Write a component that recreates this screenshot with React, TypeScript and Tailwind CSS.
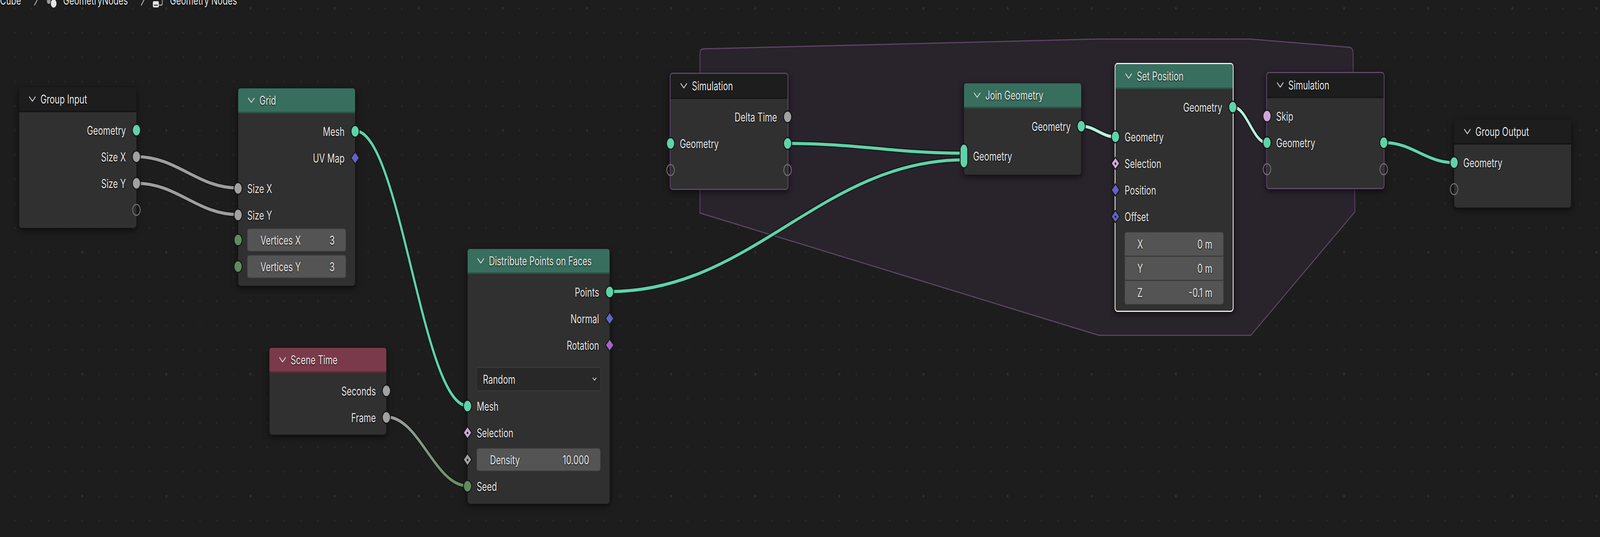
import React, { useLayoutEffect, useState } from "react";

type Kind = "geo" | "float" | "int" | "vec" | "bool" | "rot";

const fills: Record<Kind, string> = {
  geo: "bg-[#5ed3a9]",
  float: "bg-[#a1a1a1]",
  int: "bg-[#5f8b5f]",
  vec: "bg-[#6363c7]",
  bool: "bg-[#cda6d7]",
  rot: "bg-[#a463c9]",
};

const textCls = "text-[31px] leading-none text-[#e4e4e4] whitespace-nowrap [text-shadow:0_2px_3px_rgba(0,0,0,0.7)]";

// sockets
function Dot({ k }: { k: Kind }) {
  return <span className={`block h-[33px] w-[33px] rounded-full border-[3px] border-[#171717] ${fills[k]}`} />;
}

function Diamond({ k, dot = false }: { k: Kind; dot?: boolean }) {
  return (
    <span className={`flex h-[25px] w-[25px] rotate-45 items-center justify-center rounded-[2px] border-[3px] border-[#171717] ${fills[k]}`}>
      {dot && <span className="block h-[6px] w-[6px] rounded-full bg-[#1a1a1a]" />}
    </span>
  );
}

function Hollow() {
  return <span className="block h-[31px] w-[31px] rounded-full border-[3px] border-[#6e6e6e]" />;
}

function Multi() {
  return <span className={`block h-[64px] w-[31px] rounded-full border-[3px] border-[#171717] ${fills.geo}`} />;
}

function SockL({ children }: { children: React.ReactNode }) {
  return <span className="absolute left-0 top-1/2 flex -translate-x-1/2 -translate-y-1/2 items-center justify-center">{children}</span>;
}

function SockR({ children }: { children: React.ReactNode }) {
  return <span className="absolute right-0 top-1/2 flex translate-x-1/2 -translate-y-1/2 items-center justify-center">{children}</span>;
}

function Row({ label, l, r, out = false }: { label?: string; l?: React.ReactNode; r?: React.ReactNode; out?: boolean }) {
  return (
    <div className={`relative flex h-[68px] shrink-0 items-center ${out ? "justify-end pr-[39px]" : "pl-[34px]"}`}>
      {l && <SockL>{l}</SockL>}
      {label && <span className={textCls}>{label}</span>}
      {r && <SockR>{r}</SockR>}
    </div>
  );
}

function FieldRow({ label, value, l }: { label: string; value: string; l?: React.ReactNode }) {
  return (
    <div className="relative shrink-0 px-[33px]">
      {l && <SockL>{l}</SockL>}
      <div className="flex h-[60px] items-center justify-between rounded-[8px] border-2 border-[#3b3b3b] bg-[#545454] pl-[48px] pr-[41px]">
        <span className={textCls}>{label}</span>
        <span className={textCls}>{value}</span>
      </div>
    </div>
  );
}

function Chevron() {
  return (
    <svg width="26" height="15" viewBox="0 0 26 15" className="shrink-0">
      <polyline points="2,2 13,13 24,2" fill="none" stroke="#d4d4d4" strokeWidth="2.6" strokeLinecap="round" strokeLinejoin="round" />
    </svg>
  );
}

function Node({
  pos,
  title,
  head = "bg-[#1d1d1d]",
  frame = "border border-[#141414]",
  children,
}: {
  pos: string;
  title: string;
  head?: string;
  frame?: string;
  children: React.ReactNode;
}) {
  return (
    <div className={`absolute flex flex-col rounded-[10px] bg-[#303030] shadow-[0_6px_18px_rgba(0,0,0,0.55)] ${frame} ${pos}`}>
      <div className={`flex h-[64px] shrink-0 items-center gap-[17px] rounded-t-[8px] border-b-4 border-black/25 pl-[36px] ${head}`}>
        <Chevron />
        <span className={textCls}>{title}</span>
      </div>
      <div className="flex flex-col pt-[12px]">{children}</div>
    </div>
  );
}

type Wire = { a: [number, number]; b: [number, number]; color: string };

const wires: Wire[] = [
  { a: [507, 401], b: [882, 481], color: "#9e9e9e" },
  { a: [507, 469], b: [882, 549], color: "#9e9e9e" },
  { a: [1318, 335], b: [1733, 1038], color: "#5ed3a9" },
  { a: [1434, 1067], b: [1733, 1243], color: "url(#frameSeed)" },
  { a: [2262, 746], b: [3575, 409], color: "#5ed3a9" },
  { a: [2922, 367], b: [3575, 392], color: "#5ed3a9" },
  { a: [4011, 323], b: [4136, 350], color: "#b8f1de" },
  { a: [4574, 274], b: [4697, 365], color: "#b8f1de" },
  { a: [5134, 365], b: [5392, 416], color: "#5ed3a9" },
];

function wirePath([x1, y1]: [number, number], [x2, y2]: [number, number]) {
  const h = Math.abs(x2 - x1) * 0.4;
  return `M${x1} ${y1} C${x1 + h} ${y1} ${x2 - h} ${y2} ${x2} ${y2}`;
}

const tileDots = [0, 1, 2, 3, 4].flatMap((i) => [0, 1, 2, 3, 4].map((j) => ({ i, j })));

function Canvas() {
  return (
    <svg className="absolute inset-0" width="5934" height="1374" viewBox="0 0 5934 1374">
      <defs>
        <pattern id="dots" x="273.8" y="-9.7" width="312" height="312" patternUnits="userSpaceOnUse">
          {tileDots.map(({ i, j }) => (
            <circle
              key={`${i}-${j}`}
              cx={31.2 + 62.4 * i}
              cy={31.2 + 62.4 * j}
              r={i === 0 && j === 0 ? 3.6 : 2.5}
              fill={i === 0 && j === 0 ? "#2f2f2f" : "#2a2a2a"}
            />
          ))}
        </pattern>
        <linearGradient id="frameSeed" gradientUnits="userSpaceOnUse" x1="1434" y1="0" x2="1733" y2="0">
          <stop offset="0" stopColor="#a1a1a1" />
          <stop offset="1" stopColor="#5f8b5f" />
        </linearGradient>
      </defs>
      <rect width="5934" height="1374" fill="url(#dots)" />

      {/* simulation zone */}
      <path
        d="M2596 138 Q2596 125 2609 125 L4070 100 L4639 100 L5004 121 Q5018 122 5018 136 L5025 542 L4639 858 L4076 858 L2596 545 Z"
        fill="#29232b"
        stroke="#5b4563"
        strokeWidth="3"
        strokeLinejoin="round"
      />

      {wires.map((w, i) => (
        <g key={i}>
          <path d={wirePath(w.a, w.b)} fill="none" stroke="#151515" strokeWidth="13" strokeLinecap="round" />
          <path d={wirePath(w.a, w.b)} fill="none" stroke={w.color} strokeWidth="8" strokeLinecap="round" />
        </g>
      ))}
    </svg>
  );
}

function Breadcrumb() {
  return (
    <div className="relative -mt-[20px] flex h-[40px] items-center">
      <span className={`${textCls} leading-[40px]`}>Cube</span>
      <svg width="16" height="40" viewBox="0 0 16 40" className="ml-[47px] shrink-0">
        <polyline points="3,7 13,20 3,33" fill="none" stroke="#c8c8c8" strokeWidth="2.5" strokeLinecap="round" strokeLinejoin="round" />
      </svg>
      <svg width="36" height="40" viewBox="0 0 36 40" className="ml-[33px] shrink-0">
        <circle cx="7" cy="23" r="7" fill="#9a9a9a" />
        <circle cx="25" cy="29" r="10.5" fill="#e6e6e6" />
      </svg>
      <span className={`${textCls} ml-[24px] leading-[40px]`}>GeometryNodes</span>
      <svg width="16" height="40" viewBox="0 0 16 40" className="ml-[47px] shrink-0">
        <polyline points="3,7 13,20 3,33" fill="none" stroke="#c8c8c8" strokeWidth="2.5" strokeLinecap="round" strokeLinejoin="round" />
      </svg>
      <svg width="40" height="40" viewBox="0 0 40 40" className="ml-[29px] shrink-0">
        <rect x="1" y="23" width="22" height="16" rx="4" fill="#e6e6e6" />
        <rect x="5" y="32" width="14" height="2.5" fill="#2a2a2a" />
        <path d="M23 33 H32 Q36 33 36 29 V18" fill="none" stroke="#bdbdbd" strokeWidth="2.5" />
      </svg>
      <span className={`${textCls} ml-[24px] leading-[40px]`}>Geometry Nodes</span>
    </div>
  );
}

// the editor is laid out at 5934x1374 and fitted to whatever window we get
function useFit() {
  const read = () =>
    typeof window === "undefined" ? { x: 1, y: 1 } : { x: window.innerWidth / 5934, y: window.innerHeight / 1374 };
  const [fit, setFit] = useState(read);
  useLayoutEffect(() => {
    const onResize = () => setFit(read());
    onResize();
    window.addEventListener("resize", onResize);
    return () => window.removeEventListener("resize", onResize);
  }, []);
  return fit;
}

export default function App() {
  const fit = useFit();
  return (
    <div className="h-screen w-full overflow-hidden bg-[#1d1d1d]">
      <div
        className="relative h-[1374px] w-[5934px] origin-top-left overflow-hidden bg-[#1d1d1d] font-['Inter',sans-serif]"
        style={{ transform: `scale(${fit.x}, ${fit.y})` }}
      >
        <Canvas />
        <Breadcrumb />

        <Node pos="left-[70px] top-[222px] w-[437px] h-[362px]" title="Group Input">
          <Row out label="Geometry" r={<Dot k="geo" />} />
          <Row out label="Size X" r={<Dot k="float" />} />
          <Row out label="Size Y" r={<Dot k="float" />} />
          <Row out r={<Hollow />} />
        </Node>

        <Node pos="left-[882px] top-[225px] w-[436px] h-[507px]" title="Grid" head="bg-[#386e5e]">
          <Row out label="Mesh" r={<Dot k="geo" />} />
          <Row out label="UV Map" r={<Diamond k="vec" />} />
          <div className="h-[10px] shrink-0" />
          <Row label="Size X" l={<Dot k="float" />} />
          <Row label="Size Y" l={<Dot k="float" />} />
          <FieldRow label="Vertices X" value="3" l={<Dot k="int" />} />
          <div className="h-[8px] shrink-0" />
          <FieldRow label="Vertices Y" value="3" l={<Dot k="int" />} />
        </Node>

        <Node pos="left-[998px] top-[889px] w-[436px] h-[224px]" title="Scene Time" head="bg-[#7b3a4b]">
          <Row out label="Seconds" r={<Dot k="float" />} />
          <Row out label="Frame" r={<Dot k="float" />} />
        </Node>

        <Node pos="left-[1733px] top-[636px] w-[529px] h-[654px]" title="Distribute Points on Faces" head="bg-[#386e5e]">
          <Row out label="Points" r={<Dot k="geo" />} />
          <Row out label="Normal" r={<Diamond k="vec" />} />
          <Row out label="Rotation" r={<Diamond k="rot" />} />
          <div className="h-[22px] shrink-0" />
          <div className="mx-[32px] flex h-[62px] shrink-0 items-center justify-between rounded-[8px] border-2 border-[#3c3c3c] bg-[#282828] pl-[23px] pr-[14px]">
            <span className={textCls}>Random</span>
            <svg width="16" height="10" viewBox="0 0 16 10">
              <polyline points="2,2 8,8 14,2" fill="none" stroke="#d8d8d8" strokeWidth="2.4" strokeLinecap="round" strokeLinejoin="round" />
            </svg>
          </div>
          <div className="h-[4px] shrink-0" />
          <Row label="Mesh" l={<Dot k="geo" />} />
          <Row label="Selection" l={<Diamond k="bool" dot />} />
          <div className="h-[5px] shrink-0" />
          <FieldRow label="Density" value="10.000" l={<Diamond k="float" dot />} />
          <div className="h-[4px] shrink-0" />
          <Row label="Seed" l={<Dot k="int" />} />
        </Node>

        <Node pos="left-[2484px] top-[186px] w-[440px] h-[300px]" title="Simulation" frame="border-[3px] border-[#5e4868]">
          <Row out label="Delta Time" r={<Dot k="float" />} />
          <Row label="Geometry" l={<Dot k="geo" />} r={<Dot k="geo" />} />
          <Row l={<Hollow />} r={<Hollow />} />
        </Node>

        <Node pos="left-[3574px] top-[212px] w-[437px] h-[236px]" title="Join Geometry" head="bg-[#386e5e]">
          <Row out label="Geometry" r={<Dot k="geo" />} />
          <div className="h-[8px] shrink-0" />
          <Row label="Geometry" l={<Multi />} />
        </Node>

        <Node pos="left-[4134px] top-[161px] w-[441px] h-[637px]" title="Set Position" head="bg-[#386e5e]" frame="border-[3px] border-[#f0f0f0]">
          <Row out label="Geometry" r={<Dot k="geo" />} />
          <div className="h-[8px] shrink-0" />
          <Row label="Geometry" l={<Dot k="geo" />} />
          <Row label="Selection" l={<Diamond k="bool" dot />} />
          <Row label="Position" l={<Diamond k="vec" />} />
          <Row label="Offset" l={<Diamond k="vec" dot />} />
          <div className="h-[5px] shrink-0" />
          <div className="mx-[33px] flex shrink-0 flex-col gap-[3px] overflow-hidden rounded-[8px] border-2 border-[#3b3b3b] bg-[#3b3b3b]">
            {[
              ["X", "0 m"],
              ["Y", "0 m"],
              ["Z", "-0.1 m"],
            ].map(([axis, val]) => (
              <div key={axis} className="flex h-[59px] items-center justify-between bg-[#545454] pl-[46px] pr-[41px]">
                <span className={textCls}>{axis}</span>
                <span className={textCls}>{val}</span>
              </div>
            ))}
          </div>
        </Node>

        <Node pos="left-[4696px] top-[184px] w-[439px] h-[300px]" title="Simulation" frame="border-[3px] border-[#5e4868]">
          <Row label="Skip" l={<Dot k="bool" />} />
          <Row label="Geometry" l={<Dot k="geo" />} r={<Dot k="geo" />} />
          <Row l={<Hollow />} r={<Hollow />} />
        </Node>

        <Node pos="left-[5392px] top-[305px] w-[436px] h-[227px]" title="Group Output">
          <Row label="Geometry" l={<Dot k="geo" />} />
          <Row l={<Hollow />} />
        </Node>
      </div>
    </div>
  );
}
